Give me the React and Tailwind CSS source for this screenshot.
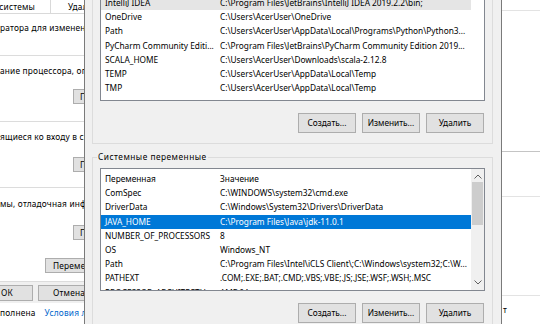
import React from "react";

const topRows = [
  ["IntelliJ IDEA", "C:\\Program Files\\JetBrains\\IntelliJ IDEA 2019.2.2\\bin;", "gray"],
  ["OneDrive", "C:\\Users\\AcerUser\\OneDrive"],
  ["Path", "C:\\Users\\AcerUser\\AppData\\Local\\Programs\\Python\\Python3..."],
  ["PyCharm Community Editi...", "C:\\Program Files\\JetBrains\\PyCharm Community Edition 2019..."],
  ["SCALA_HOME", "C:\\Users\\AcerUser\\Downloads\\scala-2.12.8"],
  ["TEMP", "C:\\Users\\AcerUser\\AppData\\Local\\Temp"],
  ["TMP", "C:\\Users\\AcerUser\\AppData\\Local\\Temp"],
];

const sysRows = [
  ["Переменная", "Значение"],
  ["ComSpec", "C:\\WINDOWS\\system32\\cmd.exe"],
  ["DriverData", "C:\\Windows\\System32\\Drivers\\DriverData"],
  ["JAVA_HOME", "C:\\Program Files\\Java\\jdk-11.0.1", "sel"],
  ["NUMBER_OF_PROCESSORS", "8"],
  ["OS", "Windows_NT"],
  ["Path", "C:\\Program Files\\Intel\\iCLS Client\\;C:\\Windows\\system32;C:\\W..."],
  ["PATHEXT", ".COM;.EXE;.BAT;.CMD;.VBS;.VBE;.JS;.JSE;.WSF;.WSH;.MSC"],
  ["PROCESSOR_ARCHITECTU...", "AMD64"],
];

function Row({ name, value, state }) {
  const tone =
    state === "sel"
      ? "bg-[#0078d7] text-white"
      : state === "gray"
      ? "bg-[#e5e5e5]"
      : "";
  return (
    <div className={`flex h-[14.2px] shrink-0 items-center whitespace-nowrap ${tone}`}>
      <div className="w-[115px] shrink-0 overflow-hidden pl-[4px]">{name}</div>
      <div className="min-w-0 flex-1 overflow-hidden pl-[4px]">{value}</div>
    </div>
  );
}

function Btn({ children }) {
  return (
    <div className="flex h-[20px] w-[58px] items-center justify-center border border-[#adadad] bg-[#e1e1e1]">
      {children}
    </div>
  );
}

function Buttons() {
  return (
    <div className="mt-[12px] flex justify-end gap-[6px] pr-[1px]">
      <Btn>Создать...</Btn>
      <Btn>Изменить...</Btn>
      <Btn>Удалить</Btn>
    </div>
  );
}

function Chevron({ up }) {
  return (
    <svg width="8" height="5" viewBox="0 0 8 5">
      <polyline
        points={up ? "0.5,4.5 4,1 7.5,4.5" : "0.5,0.5 4,4 7.5,0.5"}
        fill="none"
        stroke="#606060"
        strokeWidth="1"
      />
    </svg>
  );
}

function LeftWindow() {
  return (
    <div className="flex h-[324px] w-[84px] shrink-0 flex-col overflow-hidden whitespace-nowrap bg-white tracking-[0.2px] text-black">
      <div className="flex h-[14px] shrink-0 border-b border-[#d9d9d9]">
        <div className="flex w-[51px] shrink-0 items-center justify-end overflow-hidden border-r border-[#d9d9d9] pr-[15px]">
          Защита системы
        </div>
        <div className="flex items-center pl-[17px]">Удаленный доступ</div>
      </div>
      <div className="h-[42px] shrink-0 border-b border-[#dcdcdc] pt-[7px] leading-[14px]">
        ратора для изменения большинства параметров
      </div>
      <div className="flex h-[66px] shrink-0 flex-col border-b border-[#dcdcdc] pt-[8px] leading-[14px]">
        <div>ание процессора, операционной памяти</div>
        <div className="ml-[73px] mt-[11px] flex h-[15px] w-[70px] items-center border border-[#adadad] bg-[#e1e1e1] pl-[6px]">
          Параметры...
        </div>
      </div>
      <div className="flex h-[66px] shrink-0 flex-col border-b border-[#dcdcdc] pt-[8px] leading-[14px]">
        <div>ящиеся ко входу в систему</div>
        <div className="ml-[73px] mt-[13px] flex h-[15px] w-[70px] items-center border border-[#adadad] bg-[#e1e1e1] pl-[6px]">
          Параметры...
        </div>
      </div>
      <div className="flex h-[94px] shrink-0 flex-col border-b border-[#dcdcdc] pt-[9px] leading-[14px]">
        <div>мы, отладочная информация</div>
        <div className="ml-[73px] mt-[14px] flex h-[15px] w-[70px] items-center border border-[#adadad] bg-[#e1e1e1] pl-[6px]">
          Параметры...
        </div>
        <div className="ml-[45px] mt-[18px] flex h-[15px] w-[90px] items-center border border-[#adadad] bg-[#e1e1e1] pl-[7px]">
          Переменные среды...
        </div>
      </div>
      <div className="flex h-[21px] shrink-0 items-center gap-[5px] bg-[#f0f0f0]">
        <div className="flex h-[16px] w-[33px] shrink-0 items-center border-y border-r border-[#adadad] bg-[#e1e1e1] pl-[1px]">
          ОК
        </div>
        <div className="flex h-[16px] w-[60px] shrink-0 items-center border border-[#adadad] bg-[#e1e1e1] pl-[14px]">
          Отмена
        </div>
      </div>
      <div className="flex flex-1 items-center gap-[9px] pb-[1px]">
        <span>полнена</span>
        <span className="text-[#0066cc]">Условия лицензионного соглашения</span>
      </div>
    </div>
  );
}

function Dialog() {
  return (
    <div className="flex h-[324px] w-[418px] shrink-0 flex-col overflow-hidden border-x border-[#7a7a7a] bg-[#f0f0f0] text-black">
      <div className="ml-[7px] mr-[8px] shrink-0 border-x border-b border-[#dcdcdc] px-[7px] pb-[10px]">
        <div className="h-[101px] overflow-hidden border-x border-b border-[#828790] bg-white">
          <div className="-mt-[4px] flex w-[370px] flex-col">
            {topRows.map(([n, v, s], i) => (
              <Row key={i} name={n} value={v} state={s} />
            ))}
          </div>
        </div>
        <Buttons />
      </div>
      <fieldset className="ml-[7px] mr-[8px] mt-[6px] min-w-0 shrink-0 border border-[#dcdcdc] pb-[10px]">
        <legend className="ml-[4px] px-[1px] leading-[14px] tracking-[0.5px]">Системные переменные</legend>
        <div className="px-[7px] pt-[4px]">
          <div className="flex h-[123px] overflow-hidden border border-[#828790] bg-white">
            <div className="flex w-[370px] shrink-0 flex-col overflow-hidden pt-[3px]">
              {sysRows.map(([n, v, s], i) => (
                <Row key={i} name={n} value={v} state={s} />
              ))}
            </div>
            <div className="flex w-[13px] shrink-0 flex-col bg-[#f0f0f0]">
              <div className="flex h-[13px] items-end justify-center pb-[3px]">
                <Chevron up />
              </div>
              <div className="mx-[1px] h-[43px] bg-[#cdcdcd]" />
              <div className="flex-1" />
              <div className="flex h-[13px] items-start justify-center pt-[3px]">
                <Chevron />
              </div>
            </div>
          </div>
          <Buttons />
        </div>
      </fieldset>
    </div>
  );
}

function RightWindow() {
  return (
    <div className="flex h-[324px] flex-1 flex-col overflow-hidden whitespace-nowrap bg-white text-black">
      <div className="h-[11px] shrink-0 border-b border-[#e3e3e3]" />
      <div className="h-[141px] shrink-0 border-b border-[#c4c4c4]" />
      <div className="h-[45px] shrink-0 border-b border-[#e3e3e3]" />
      <div className="h-[99px] shrink-0 border-b border-[#e3e3e3]" />
      <div className="flex flex-1 items-center pl-[1px]">т</div>
    </div>
  );
}

export default function App() {
  return (
    <div className="flex h-[324px] w-[540px] overflow-hidden font-['Noto_Sans',sans-serif] text-[8.3px] leading-[14px]">
      <LeftWindow />
      <Dialog />
      <RightWindow />
    </div>
  );
}
